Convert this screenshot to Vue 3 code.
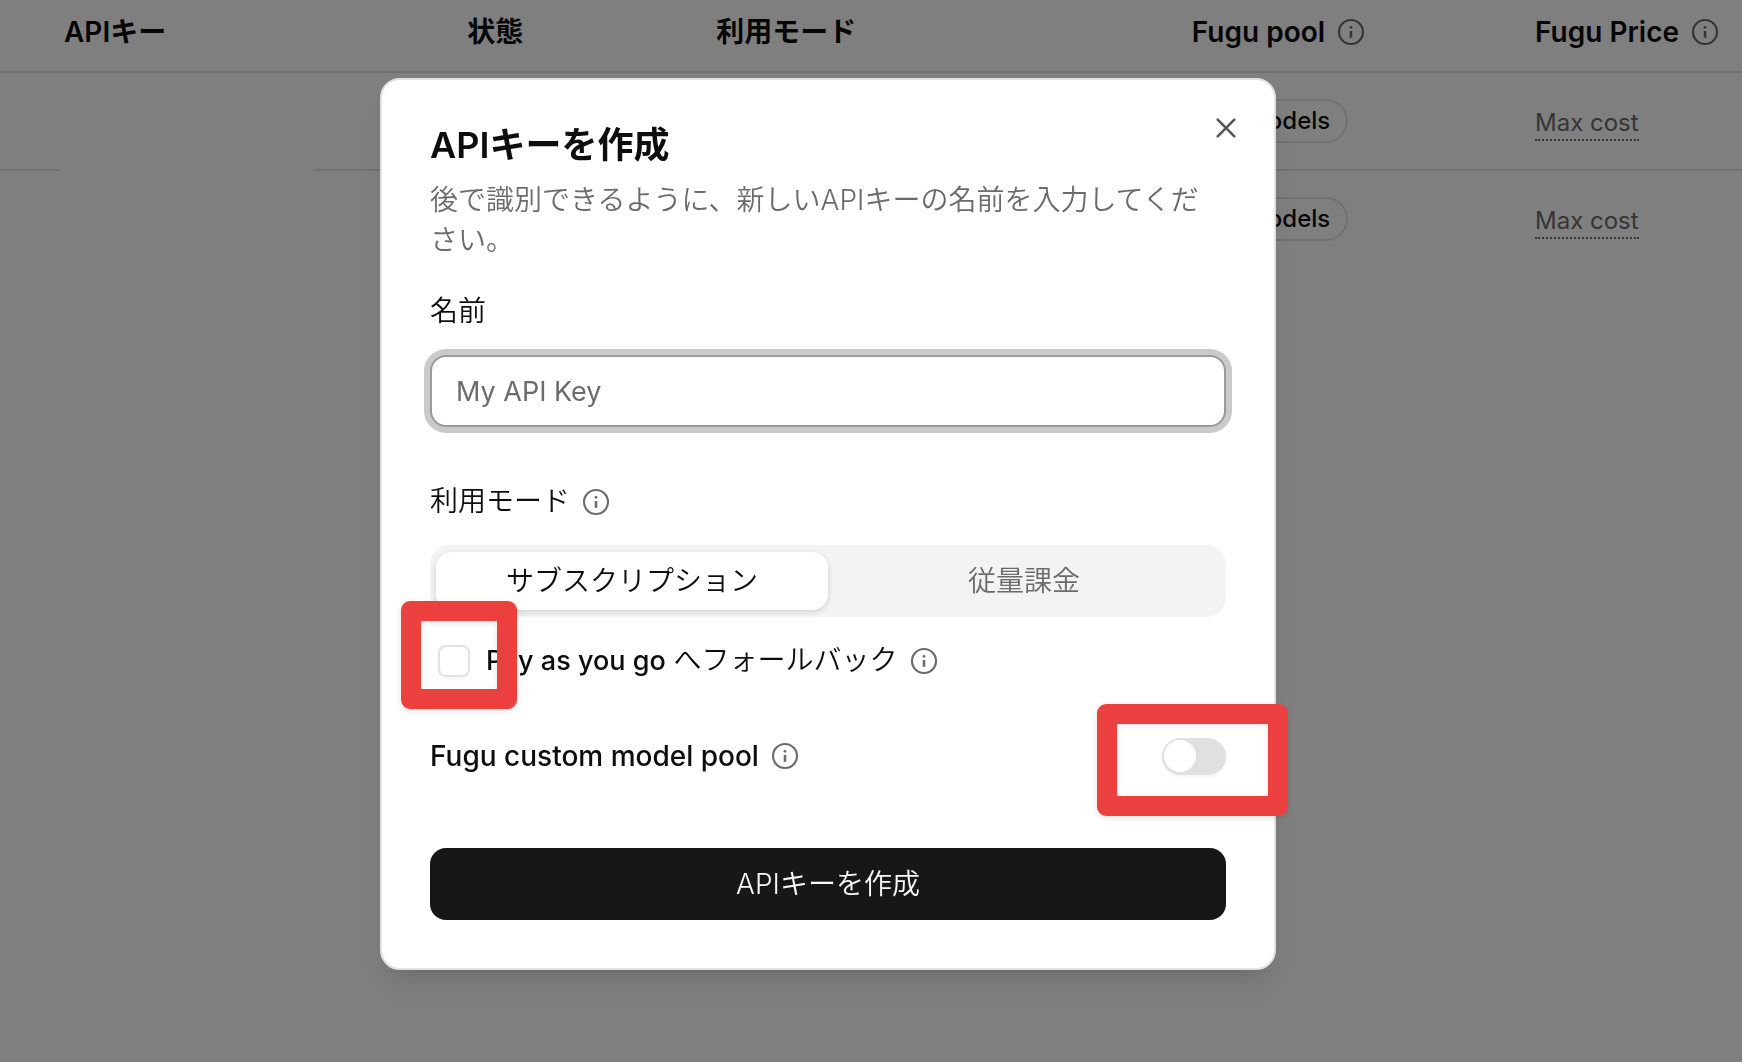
<template>
  <main class="page">
    <table class="keys-table">
      <thead>
        <tr>
          <th class="col-key">APIキー</th>
          <th class="col-status">状態</th>
          <th class="col-mode">利用モード</th>
          <th class="col-pool">
            <span class="with-icon">Fugu pool <InfoIcon /></span>
          </th>
          <th class="col-price">
            <span class="with-icon">Fugu Price <InfoIcon /></span>
          </th>
        </tr>
      </thead>
      <tbody>
        <tr v-for="row in rows" :key="row.id">
          <td class="col-key"><span class="mask"></span></td>
          <td></td>
          <td></td>
          <td><span class="badge">{{ row.pool }}</span></td>
          <td class="price-cell"><span class="price">{{ row.price }}</span></td>
        </tr>
      </tbody>
    </table>

    <div v-if="open" class="overlay">
      <form class="dialog" role="dialog" aria-labelledby="dialog-title" @submit.prevent="create">
        <button type="button" class="close" aria-label="閉じる" @click="open = false">
          <svg viewBox="0 0 32 32" width="32" height="32" fill="none" stroke="currentColor" stroke-width="2.6" stroke-linecap="round">
            <path d="M24.3 7.7 7.7 24.3M7.7 7.7l16.6 16.6" />
          </svg>
        </button>

        <h2 id="dialog-title">APIキーを作成</h2>
        <p class="description">後で識別できるように、新しいAPIキーの名前を入力してください。</p>

        <label class="label" for="key-name">名前</label>
        <input id="key-name" v-model="name" class="text-field" type="text" placeholder="My API Key" />

        <div class="label mode-label">利用モード <InfoIcon /></div>
        <div class="tabs">
          <button
            v-for="m in modes"
            :key="m.id"
            type="button"
            class="tab"
            :class="{ active: mode === m.id }"
            @click="mode = m.id"
          >{{ m.label }}</button>
        </div>

        <div class="fallback-row">
          <span class="control control-start">
            <input id="fallback" v-model="fallback" type="checkbox" class="checkbox" />
            <span class="marker marker-checkbox"></span>
          </span>
          <label for="fallback"><span class="latin small">Pay as you go</span> へフォールバック</label>
          <InfoIcon />
        </div>

        <div class="pool-row">
          <label for="custom-pool" class="latin">Fugu custom model pool</label>
          <InfoIcon />
          <span class="control control-end">
            <input id="custom-pool" v-model="customPool" type="checkbox" role="switch" class="switch" />
            <span class="marker marker-switch"></span>
          </span>
        </div>

        <button type="submit" class="submit">APIキーを作成</button>
      </form>
    </div>
  </main>
</template>

<script setup>
import { ref, h } from 'vue'

const rows = [
  { id: 1, pool: '20 models', price: 'Max cost' },
  { id: 2, pool: '20 models', price: 'Max cost' },
]
const modes = [
  { id: 'subscription', label: 'サブスクリプション' },
  { id: 'metered', label: '従量課金' },
]

const open = ref(true)
const name = ref('')
const mode = ref('subscription')
const fallback = ref(false)
const customPool = ref(false)

function InfoIcon() {
  return h('svg', { class: 'info-icon', viewBox: '0 0 28 28', width: 28, height: 28, fill: 'none', stroke: 'currentColor' }, [
    h('circle', { cx: 14, cy: 14, r: 12, 'stroke-width': 2.2 }),
    h('path', { d: 'M14 13v6.8', 'stroke-width': 2.6 }),
    h('circle', { cx: 14, cy: 9.3, r: 1.4, fill: 'currentColor', stroke: 'none' }),
  ])
}

function create() {
  if (!name.value) return
  open.value = false
}
</script>

<style>
body { margin: 0; background: #fff; }
.info-icon { flex: none; color: #6b6b6b; }
</style>

<style scoped>
.page {
  min-height: 100vh;
  overflow: hidden;
  color: #0d0d0d;
  font-family: Inter, "Noto Sans CJK JP", sans-serif;
  font-size: 28px;
  line-height: 40px;
}
button, input { font: inherit; }

.keys-table {
  width: 100%;
  table-layout: fixed;
  border-collapse: separate;
  border-spacing: 0;
}
th, td { box-sizing: border-box; padding: 0 16px; text-align: left; white-space: nowrap; }
th { height: 73px; padding-bottom: 8px; border-bottom: 2px solid #e2e2e2; font-weight: 600; }
td { height: 98px; border-bottom: 2px solid #e2e2e2; }
tbody tr:last-child td { border-bottom-color: transparent; }
.col-key { width: 25.9%; padding-left: 64px; }
.col-status { width: 14.3%; }
.col-mode { width: 27.3%; }
.col-pool { width: 19.7%; }
.col-price { width: 12.8%; }
td.col-key { position: relative; }
.mask {
  position: absolute;
  inset: 12px 137px -12px 60px;
  z-index: 1;
  background: #fff;
}
.with-icon { display: flex; align-items: center; gap: 12px; }
.badge {
  display: inline-block;
  padding: 0 16px;
  border: 2px solid #e2e2e2;
  border-radius: 22px;
  font-size: 24px;
  font-weight: 500;
}
.price-cell { padding-top: 6px; }
.price {
  display: block;
  width: fit-content;
  border-bottom: 2px dotted #6b6b6b;
  color: #6b6b6b;
  font-size: 24px;
  line-height: 32px;
}

.overlay {
  position: fixed;
  inset: 0;
  z-index: 10;
  box-sizing: border-box;
  padding: 78px 86px 0 0;
  overflow: auto;
  background: rgba(0, 0, 0, 0.5);
}
.dialog {
  position: relative;
  box-sizing: border-box;
  max-width: 896px;
  margin: 0 auto;
  padding: 48px;
  border: 2px solid #e2e2e2;
  border-radius: 20px;
  background: #fff;
  box-shadow: 0 20px 30px -6px rgba(0, 0, 0, 0.1), 0 8px 12px -8px rgba(0, 0, 0, 0.1);
  font-weight: 350;
}
.close {
  position: absolute;
  top: 32px;
  right: 32px;
  display: flex;
  padding: 0;
  border: 0;
  background: none;
  color: #555;
}
h2 { margin: 0; font-size: 36px; font-weight: 600; line-height: 34px; }
.description { margin: 18px 0 0; color: #6b6b6b; }
.label { display: flex; align-items: center; margin-top: 32px; line-height: 39px; }
.text-field {
  display: block;
  box-sizing: border-box;
  width: 100%;
  height: 72px;
  margin-top: 24px;
  padding: 0 24px;
  border: 2px solid #999;
  border-radius: 16px;
  outline: 0;
  background: #fff;
  box-shadow: 0 0 0 6px #cacaca;
  font-size: 27px;
  font-weight: 400;
}
.text-field::placeholder { color: #6b6b6b; opacity: 1; }
.mode-label { gap: 12px; margin-top: 55px; }
.tabs {
  display: flex;
  box-sizing: border-box;
  height: 72px;
  margin-top: 24px;
  padding: 7px 6px;
  border-radius: 20px;
  background: #f3f3f3;
}
.tab {
  flex: 1;
  padding: 0;
  border: 0;
  border-radius: 16px;
  background: none;
  color: #6b6b6b;
}
.tab.active { background: #fff; color: #0d0d0d; box-shadow: 0 2px 6px rgba(0, 0, 0, 0.14); }
.latin { font-weight: 500; }
.small { font-size: 27px; }
.fallback-row { display: flex; align-items: center; gap: 12px; margin-top: 23px; padding-left: 8px; }
.pool-row { display: flex; align-items: center; gap: 12px; margin-top: 55px; }
.control { position: relative; display: flex; }
.control-start { margin-right: 4px; }
.control-end { margin-left: auto; }
.checkbox, .switch { appearance: none; box-sizing: border-box; margin: 0; }
.checkbox {
  width: 32px;
  height: 32px;
  border: 2px solid #e2e2e2;
  border-radius: 8px;
  background: #fff;
  box-shadow: 0 2px 4px rgba(0, 0, 0, 0.05);
}
.checkbox:checked { background: #171717; }
.switch {
  display: flex;
  align-items: center;
  width: 64px;
  height: 37px;
  padding: 0 2px;
  border-radius: 19px;
  background: #e0e0e0;
  box-shadow: 0 2px 4px rgba(0, 0, 0, 0.05);
}
.switch::before { content: ""; width: 32px; height: 32px; border-radius: 50%; background: #fff; }
.switch:checked { justify-content: flex-end; background: #171717; }
.marker {
  position: absolute;
  z-index: 1;
  border: 20px solid #ec4040;
  border-radius: 9px;
  box-shadow: 0 2px 6px rgba(0, 0, 0, 0.12), inset 0 2px 6px rgba(0, 0, 0, 0.1);
  pointer-events: none;
}
.marker-checkbox { inset: -44px -47px -32px -37px; }
.marker-switch { inset: -34px -62px -41px -65px; }
.submit {
  display: block;
  width: 100%;
  height: 72px;
  margin-top: 72px;
  padding: 0;
  border: 0;
  border-radius: 16px;
  background: #171717;
  color: #fafafa;
}
</style>
